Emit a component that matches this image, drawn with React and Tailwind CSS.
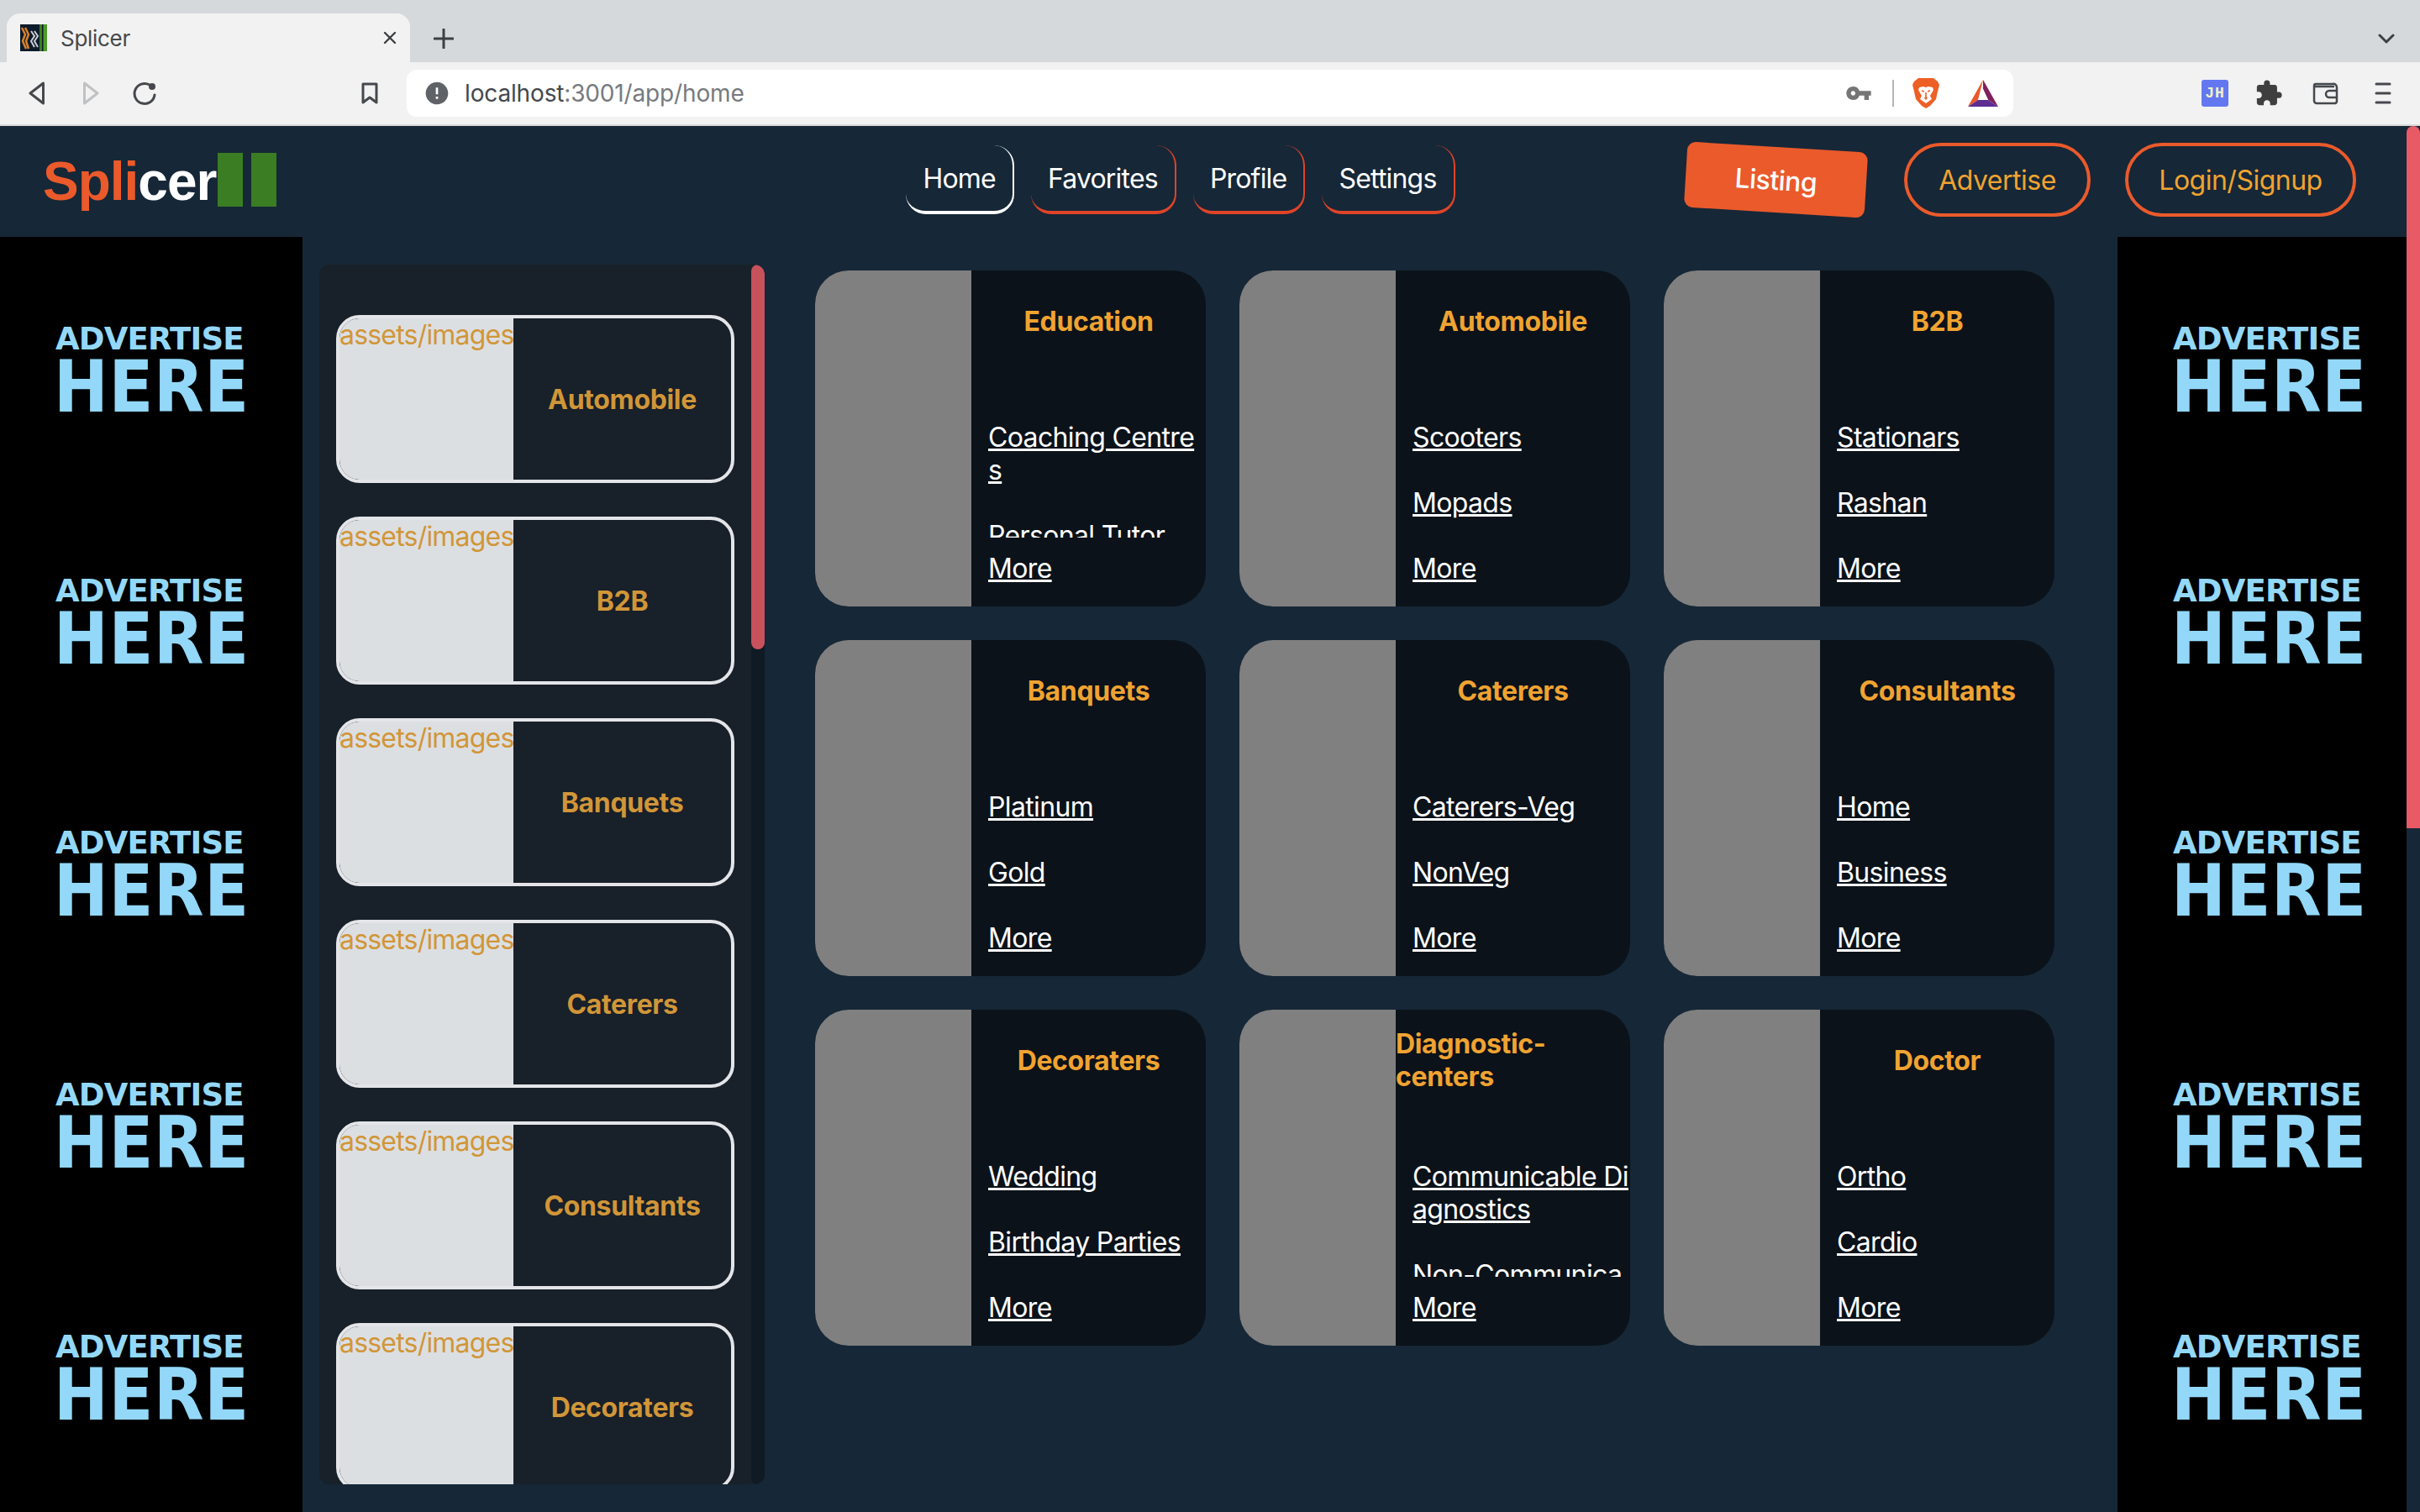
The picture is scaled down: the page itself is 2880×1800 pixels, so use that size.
import React from 'react'
import { MdError, MdExtension, MdVpnKey } from 'react-icons/md'

const SIDE = ['Automobile', 'B2B', 'Banquets', 'Caterers', 'Consultants', 'Decoraters']

const CATEGORIES = [
  { title: 'Education', links: ['Coaching Centres', 'Personal Tutor'] },
  { title: 'Automobile', links: ['Scooters', 'Mopads'] },
  { title: 'B2B', links: ['Stationars', 'Rashan'] },
  { title: 'Banquets', links: ['Platinum', 'Gold'] },
  { title: 'Caterers', links: ['Caterers-Veg', 'NonVeg'] },
  { title: 'Consultants', links: ['Home', 'Business'] },
  { title: 'Decoraters', links: ['Wedding', 'Birthday Parties'] },
  { title: 'Diagnostic-centers', links: ['Communicable Diagnostics', 'Non-Communicable Diagnostics'] },
  { title: 'Doctor', links: ['Ortho', 'Cardio'] },
]

const NAV = [
  { label: 'Home', active: true },
  { label: 'Favorites' },
  { label: 'Profile' },
  { label: 'Settings' },
]

function Favicon() {
  return (
    <svg width="32" height="32" viewBox="0 0 32 32" className="shrink-0">
      <rect width="32" height="32" fill="#0d1b2a" />
      <path d="M2 4 L6 12 L3 20 L7 29 M6 4 L10 12 L7 20 L10 29" stroke="#d9822b" strokeWidth="2.5" fill="none" />
      <path d="M13 8 L17 14 L13 20 L17 27 M17 8 L21 14 L17 20 L21 27" stroke="#c9ced3" strokeWidth="2" fill="none" />
      <rect x="23" width="3" height="32" fill="#3a7d22" />
      <rect x="27.500" width="4.500" height="32" fill="#4f9a2d" />
    </svg>
  )
}

function TabStrip() {
  return (
    <div className="h-[74px] bg-[#d5d9dc] flex items-end pl-2 pr-[30px]">
      <div className="w-[480px] h-[58px] bg-[#f2f2f2] rounded-t-[16px] flex items-center pl-4 pr-[16px]">
        <Favicon />
        <span className="ml-4 text-[26px] tracking-[-0.300px] text-[#45484c]">Splicer</span>
        <svg width="16" height="16" viewBox="0 0 16 16" className="ml-auto" stroke="#3c4043" strokeWidth="2.4" strokeLinecap="round">
          <path d="M2 2 L14 14 M14 2 L2 14" />
        </svg>
      </div>
      <div className="ml-[28px] mb-[16px]">
        <svg width="24" height="24" viewBox="0 0 24 24" stroke="#3c4043" strokeWidth="3" strokeLinecap="round">
          <path d="M12 1 V23 M1 12 H23" />
        </svg>
      </div>
      <svg width="20" height="12" viewBox="0 0 20 12" className="ml-auto mb-[22px]" fill="none" stroke="#3c4043" strokeWidth="3" strokeLinecap="round" strokeLinejoin="round">
        <path d="M2 2 L10 10 L18 2" />
      </svg>
    </div>
  )
}

function Slot({ children, className = '' }) {
  return <div className={`w-16 h-[56px] flex items-center justify-center shrink-0 ${className}`}>{children}</div>
}

function Toolbar() {
  return (
    <div className="h-[76px] bg-[#f2f2f2] border-b-2 border-[#d9d9d9] flex items-center pl-3">
      <Slot>
        <svg width="20" height="28" viewBox="0 0 20 28" fill="none" stroke="#45484c" strokeWidth="3" strokeLinejoin="round">
          <path d="M17.500 2 V26 L2 14 Z" />
        </svg>
      </Slot>
      <Slot>
        <svg width="20" height="28" viewBox="0 0 20 28" fill="none" stroke="#bfc1c3" strokeWidth="3" strokeLinejoin="round">
          <path d="M2.500 2 V26 L18 14 Z" />
        </svg>
      </Slot>
      <Slot>
        <svg width="28" height="28" viewBox="0 0 28 28" fill="none" stroke="#45484c" strokeWidth="3" strokeLinecap="round">
          <path d="M20 4 A12 12 0 1 0 26 16" />
          <circle cx="23" cy="6" r="4" fill="#45484c" stroke="none" />
        </svg>
      </Slot>
      <Slot className="ml-[204px]">
        <svg width="20" height="26" viewBox="0 0 20 26" fill="none" stroke="#45484c" strokeWidth="3" strokeLinejoin="round">
          <path d="M2 2 H18 V24 L10 18 L2 24 Z" />
        </svg>
      </Slot>
      <div className="ml-3 w-[1912px] h-[56px] bg-white rounded-[12px] flex items-center shrink-0">
        <MdError className="ml-[20px] text-[32px] text-[#5f6368]" />
        <span className="ml-[17px] text-[28px] tracking-[-0.150px] text-[#45484c]">localhost<span className="text-[#777a7e]">:3001/app/home</span></span>
        <div className="ml-auto flex items-center mr-[18px]">
          <MdVpnKey className="text-[32px] text-[#757575]" />
          <div className="ml-[24px] w-[2px] h-8 bg-[#b4b5b6]" />
          <svg width="34" height="38" viewBox="0 0 34 38" className="ml-[21px]">
            <path d="M8 1 H26 L31 5 L33 9 L31 17 L29 26 L22 34 L17 37 L12 34 L5 26 L3 17 L1 9 L3 5 Z" fill="#ee5f25" />
            <path d="M9 12 L14 11 L17 12 L20 11 L25 12 L26 15 L22 22 L24 26 L17 31 L10 26 L12 22 L8 15 Z" fill="#fff" />
            <path d="M12 16 L15 17 M22 16 L19 17 M15.500 24 L17 26 L18.500 24 M17 18 V24" stroke="#ee5f25" strokeWidth="1.600" fill="none" />
          </svg>
          <svg width="36" height="32" viewBox="0 0 36 32" className="ml-[33px]">
            <path d="M18 0 L0 32 L12 24 Z" fill="#e9572b" />
            <path d="M18 0 L36 32 L24 24 L18 11 Z" fill="#80205f" />
            <path d="M0 32 H36 L24 24 H12 Z" fill="#5d2d92" />
            <path d="M18 11 L12 24 H24 Z" fill="#fff" />
          </svg>
        </div>
      </div>
      <Slot className="ml-[208px]">
        <div className="w-8 h-8 rounded-[3px] bg-[#6378f0] flex items-center justify-center text-[18px] leading-none font-bold tracking-[1px] text-[#f3f0c8] font-['Liberation_Mono',monospace]">JH</div>
      </Slot>
      <Slot>
        <MdExtension className="text-[34px] text-[#3f3f3f]" />
      </Slot>
      <Slot className="ml-1">
        <svg width="32" height="28" viewBox="0 0 32 28" fill="none" stroke="#45484c" strokeWidth="2.500">
          <path d="M4 3 H24 A4 4 0 0 1 29 7 V24 A3 3 0 0 1 26 26 H5 A3 3 0 0 1 2 23 V5 A2 2 0 0 1 4 3 Z M2 6 H26" />
          <path d="M30 11 H20 A4 4 0 0 0 20 19 H30" />
        </svg>
      </Slot>
      <Slot className="ml-1">
        <svg width="20" height="28" viewBox="0 0 20 28" stroke="#45484c" strokeWidth="3" strokeLinecap="round">
          <path d="M2 3 H18 M2 14 H18 M2 25 H18" />
        </svg>
      </Slot>
    </div>
  )
}

function Logo() {
  return (
    <div className="flex items-center">
      <span className="text-[64px] leading-none font-bold tracking-[-1px] font-['Liberation_Sans',sans-serif] text-white mt-[4px]">
        <span className="text-[#ea5a2b]">Spli</span>cer
      </span>
      <div className="ml-[2px] w-[30px] h-16 bg-[#3a7d22]" />
      <div className="ml-[10px] w-[30px] h-16 bg-[#3a7d22]" />
    </div>
  )
}

function TopNav() {
  return (
    <div className="h-[132px] flex items-center pl-[51px] pr-[60px] pb-1 shrink-0">
      <Logo />
      <div className="ml-[749px] flex gap-5">
        {NAV.map(item => (
          <a key={item.label}
            className={`h-[82px] px-5 pt-[2px] flex items-center text-[32px] tracking-[-0.800px] text-white border-r-2 border-b-4 rounded-[24px] ${item.active ? 'border-white' : 'border-[#e04428]'}`}>
            {item.label}
          </a>
        ))}
      </div>
      <div className="ml-auto flex items-center">
        <button className="w-[215px] h-[78px] pt-[2px] rounded-[10px] bg-[#ea5a2b] text-white text-[32px] tracking-[-0.500px] font-medium rotate-[3.500deg]">Listing</button>
        <button className="ml-[45px] w-[222px] h-[88px] pt-[2px] rounded-full border-4 border-[#ea5a2b] text-[#f0a331] text-[32px] tracking-[-0.500px]">Advertise</button>
        <button className="ml-[41px] w-[275px] h-[88px] pt-[2px] rounded-full border-4 border-[#ea5a2b] text-[#f0a331] text-[32px] tracking-[-0.500px]">Login/Signup</button>
      </div>
    </div>
  )
}

function AdColumn({ className = '' }) {
  return (
    <div className={`bg-black shrink-0 pl-[66px] ${className}`}>
      {[0, 1, 2, 3, 4].map(i => (
        <div key={i} className="h-[300px] pt-[101px] text-[#93d8f8] font-bold font-['DejaVu_Sans',sans-serif]">
          <div className="text-[37px] leading-[41px] tracking-[-0.800px]">ADVERTISE</div>
          <div className="-ml-[2px] text-[86px] leading-[72px] tracking-[0.700px] font-stretch-condensed">HERE</div>
        </div>
      ))}
    </div>
  )
}

function SideCard({ name }) {
  return (
    <div className="w-[474px] h-[200px] shrink-0 flex rounded-[28px] border-4 border-[#e3e5e8] overflow-hidden">
      <div className="w-[207px] shrink-0 bg-[#dcdfe2] rounded-l-[22px] overflow-hidden whitespace-nowrap text-[32px] leading-[39px] tracking-[-0.800px] text-[#d19638]">
        assets/images/{name.toLowerCase()}.png
      </div>
      <div className="flex-1 flex items-center justify-center pt-[2px] text-[32px] font-bold tracking-[-0.350px] text-[#d19638]">{name}</div>
    </div>
  )
}

function Sidebar() {
  return (
    <div className="ml-5 mt-[33px] w-[530px] h-[1452px] shrink-0 flex rounded-[12px] bg-[#182029] overflow-hidden">
      <div className="flex-1 pl-5 pt-[60px] flex flex-col gap-10 overflow-hidden">
        {SIDE.map(name => <SideCard key={name} name={name} />)}
      </div>
      <div className="w-4 bg-[#0f1a25] rounded-full">
        <div className="h-[458px] rounded-full bg-[#c8525c]" />
      </div>
    </div>
  )
}

function CategoryCard({ title, links }) {
  return (
    <div className="h-[400px] flex rounded-[40px] overflow-hidden bg-[#0b1219]">
      <div className="w-[186px] shrink-0 bg-[#808080]" />
      <div className="flex-1 min-w-0 flex flex-col">
        <div className="h-[120px] shrink-0 flex items-center justify-center text-[32px] leading-[39px] font-bold tracking-[-0.350px] text-[#f0a331]">
          <span>{title}</span>
        </div>
        <div className="mt-[59px] h-[139px] pl-[20px] overflow-hidden text-[32px] leading-[39px] tracking-[-0.650px] text-white break-all">
          {links.map(link => <p key={link} className="mb-[39px]"><a className="underline">{link}</a></p>)}
        </div>
        <a className="mt-[17px] pl-[20px] text-[32px] leading-[39px] tracking-[-0.650px] text-white underline">More</a>
      </div>
    </div>
  )
}

export default function App() {
  return (
    <div className="w-[2880px] h-[1800px] overflow-hidden flex flex-col bg-[#162737] font-['Inter',sans-serif]">
      <TabStrip />
      <Toolbar />
      <div className="flex-1 flex min-h-0">
        <div className="flex-1 min-w-0 flex flex-col">
          <TopNav />
          <div className="flex-1 flex min-h-0">
            <AdColumn className="w-[360px]" />
            <Sidebar />
            <div className="flex-1 pl-[60px] pt-10">
              <div className="grid grid-cols-[repeat(3,465px)] gap-10">
                {CATEGORIES.map(cat => <CategoryCard key={cat.title} title={cat.title} links={cat.links} />)}
              </div>
            </div>
            <AdColumn className="w-[344px]" />
          </div>
        </div>
        <div className="w-4 shrink-0">
          <div className="h-[836px] rounded-t-full bg-[#e85a66]" />
        </div>
      </div>
    </div>
  )
}
